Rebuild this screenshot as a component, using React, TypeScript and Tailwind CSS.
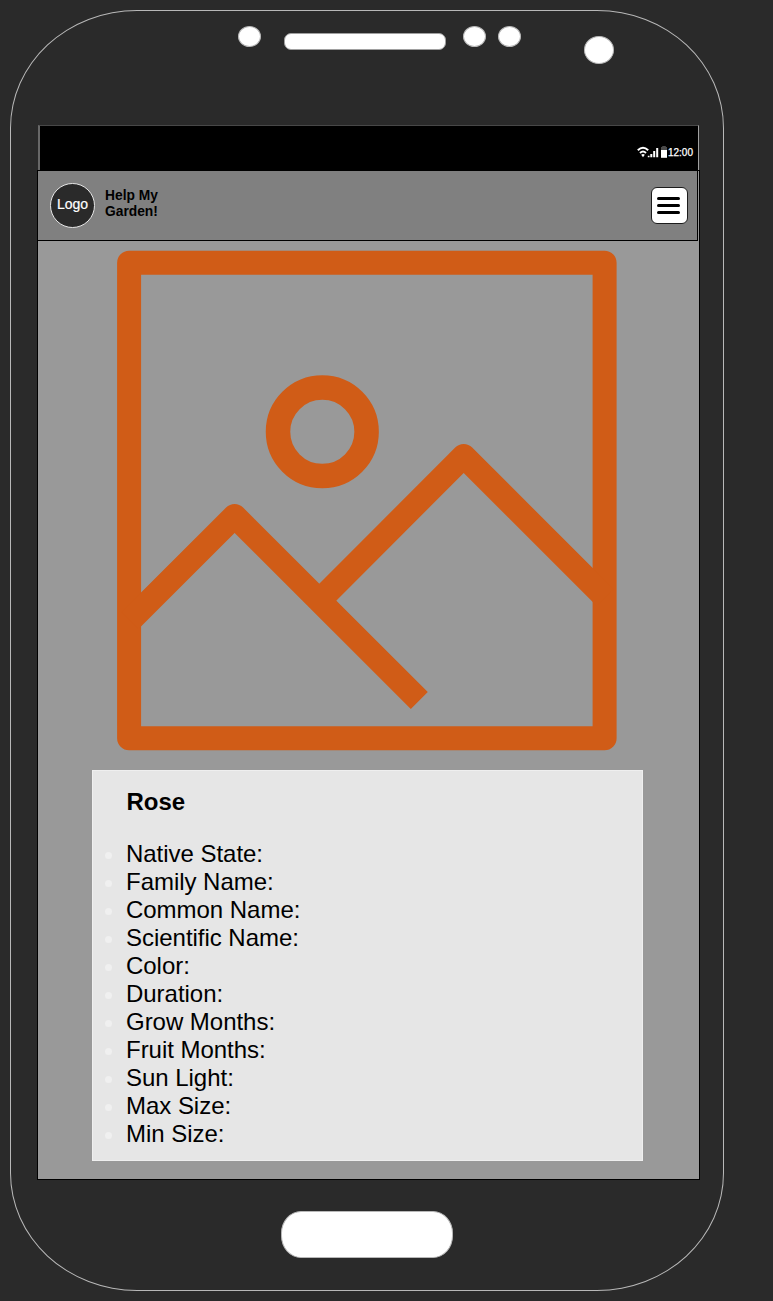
const fields = [
  'Native State:',
  'Family Name:',
  'Common Name:',
  'Scientific Name:',
  'Color:',
  'Duration:',
  'Grow Months:',
  'Fruit Months:',
  'Sun Light:',
  'Max Size:',
  'Min Size:',
];

function Sensors() {
  return (
    <div className="flex h-[114px] items-start pl-[227px] pt-[15px]">
      <span className="h-[21px] w-[23px] rounded-[50%] border border-[#b8b8b8] bg-white" />
      <span className="ml-[23px] mt-[7px] h-[17px] w-[162px] rounded-[7px] border border-[#a0a0a0] bg-white" />
      <span className="ml-[17px] h-[21px] w-[23px] rounded-[50%] border border-[#b8b8b8] bg-white" />
      <span className="ml-[12px] h-[21px] w-[23px] rounded-[50%] border border-[#b8b8b8] bg-white" />
      <span className="ml-[63px] mt-[10px] h-[28px] w-[30px] rounded-[50%] border border-[#b8b8b8] bg-white" />
    </div>
  );
}

function StatusBar() {
  return (
    <div className="ml-[27px] flex h-[45px] w-[661px] justify-end border-l-2 border-r border-t border-l-[#686868] border-r-[#a0a0a0] border-t-[#484848] bg-black pr-[5px] pt-[21px] text-white">
      <svg className="-mt-px overflow-visible" width="31" height="12" viewBox="0 0 31 12" fill="none">
        <path d="M.8 4.2Q6-.6 11.2 4.2M3 6.9Q6 4.2 9 6.9" stroke="white" strokeWidth="2" />
        <path d="M4.2 8.8Q6 7.2 7.8 8.8L6 11.2Z" fill="white" />
        <path d="M10.8 9.7h1.7v1.5h-1.7zM13.3 8h2v3.2h-2zM16.2 5h2v6.2h-2zM19.2 2h2v9.2h-2z" fill="white" />
        <path d="M24 1h1.2V0h3.6v1H30v3H24z" fill="#4b4b4b" />
        <path d="M24 4h6v7.8h-6z" fill="white" />
      </svg>
      <span className="h-[12px] text-[10px] leading-[12px] [-webkit-text-stroke:0.25px_white]">12:00</span>
    </div>
  );
}

function Header() {
  return (
    <header className="flex h-[70px] w-[660px] items-start border-b border-r border-black bg-[#808080] pl-[12px] pr-[9px] pt-[12px]">
      <div className="flex h-[45px] w-[45px] items-center justify-center rounded-full border border-[#e6e6e6] bg-[#2a2a2a] pb-[3px] text-[14px] leading-4 text-white [-webkit-text-stroke:0.2px_white]">
        Logo
      </div>
      <div className="ml-[10px] mt-[5px] text-[13.8px] font-bold leading-4 text-black">
        Help My
        <br />
        Garden!
      </div>
      <button className="ml-auto mt-[4px] flex h-[37px] w-[37px] flex-col items-center justify-center gap-[4px] rounded-[6px] border border-[#1c1c1c] bg-white pb-[1px] pr-[2px]" aria-label="Menu">
        <span className="h-[3px] w-[23px] rounded-full bg-black" />
        <span className="h-[3px] w-[23px] rounded-full bg-black" />
        <span className="h-[3px] w-[23px] rounded-full bg-black" />
      </button>
    </header>
  );
}

function PlantImage() {
  return (
    <svg className="ml-[79px] mt-[9px] block" width="501" height="501" viewBox="117 250 501 501" fill="none" stroke="#d05c17" strokeWidth="24" strokeLinejoin="round">
      <rect x="129.1" y="262.8" width="475.5" height="475.5" />
      <circle cx="322.3" cy="431.8" r="44.3" strokeWidth="24.5" />
      <path d="M130 620.5 234.6 516 419.3 700.5M320 600 463.7 456 605 597.3" />
    </svg>
  );
}

function PlantCard() {
  return (
    <section className="ml-[53.5px] mt-[19px] h-[391px] w-[551.5px] border border-[#efefef] bg-[#e6e6e6] pl-[34px] pt-[17px] text-[24px] leading-7 tracking-[-0.03px] text-black">
      <h1 className="font-bold">Rose</h1>
      <ul className="mt-6">
        {fields.map((field) => (
          <li key={field} className="-ml-[22px] flex h-7 items-center">
            <span className="mr-[14.5px] mt-[3px] h-[7px] w-[7px] rounded-full bg-[#f0f0f0]" />
            {field}
          </li>
        ))}
      </ul>
    </section>
  );
}

export default function App() {
  return (
    <div className="h-[1301px] w-full overflow-hidden bg-[#2a2a2a] pl-[10px] pt-[10px] font-['Liberation_Sans',Arial,sans-serif]">
      <div className="h-[1281px] w-[714px] rounded-[127px/118px] border border-[#b8b8b8]">
        <Sensors />
        <StatusBar />
        <main className="ml-[26px] h-[1010px] w-[663px] border border-black bg-[#999999]">
          <Header />
          <PlantImage />
          <PlantCard />
        </main>
        <div className="ml-[270px] mt-[31px] h-[47px] w-[172px] rounded-[20px/22px] border border-[#b8b8b8] bg-white" />
      </div>
    </div>
  );
}
